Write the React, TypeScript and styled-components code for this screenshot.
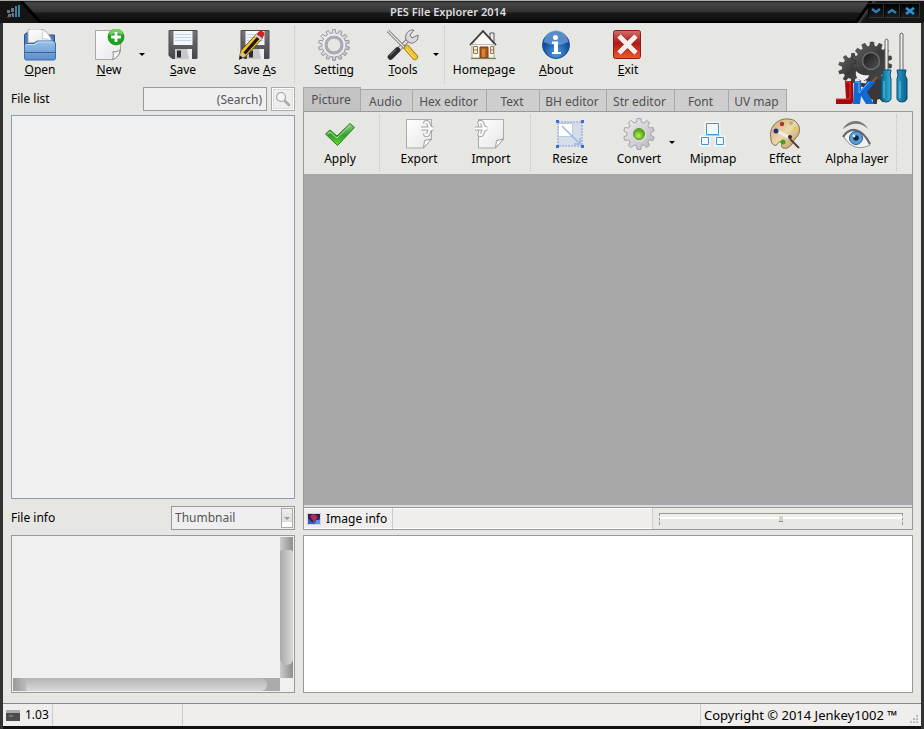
import React from "react";
import styled, { createGlobalStyle, css } from "styled-components";

const GlobalStyle = createGlobalStyle`
  * { box-sizing: border-box; }
  body {
    margin: 0;
    background: #333;
    color: #000;
    font: 12px/16px "Noto Sans", "Open Sans", sans-serif;
  }
  button, input, select, textarea { font: inherit; color: inherit; }
  button { padding: 0; border: 0; background: none; }
  svg { display: block; flex: none; }
`;

const Window = styled.div`
  min-height: 100vh;
  display: flex;
  flex-direction: column;
  background: #e6e6e2;
  border: solid #333;
  border-width: 0 3px;
`;

const TitleBar = styled.header`
  display: flex;
  align-items: stretch;
  height: 23px;
  margin: 0 -3px;
  border-top: 1px solid #aaa;
  background: linear-gradient(#1a1a1a 0, #464646 2px, #333 11px, #191919 12px, #101010 19px, #000 20px);
`;

const TitleText = styled.h1`
  flex: 1;
  margin: 0;
  text-align: center;
  color: #ddd;
  font: 600 11px/22px "Noto Sans", sans-serif;
`;

const AppBadge = styled.div`
  width: 42px;
`;

const WindowControls = styled.div`
  display: flex;
  align-items: flex-start;
  width: 70px;
  padding: 2px 3px 0 14px;
  background: linear-gradient(125deg, transparent 12px, #000 13px, #000 15px, #444 16px, #222 18px, #151515 19px);
`;

const ControlButton = styled.button<{ $wide?: boolean }>`
  display: grid;
  place-items: center;
  width: ${(p) => (p.$wide ? 20 : 16)}px;
  height: 15px;
  background: linear-gradient(#000, #1c1c1c);
  border: 1px solid #333;
  border-left-color: #000;
`;

const MainToolbar = styled.div`
  display: flex;
  justify-content: space-between;
  height: 64px;
  padding-left: 1px;
`;

const Tools = styled.div`
  display: flex;
  align-items: stretch;
`;

const PictureToolbar = styled(Tools)`
  height: 62px;
`;

const ToolItem = styled.button<{ $split?: boolean }>`
  display: flex;
  flex-direction: column;
  align-items: center;
  width: ${(p) => (p.$split ? 54 : 72)}px;
  margin-left: ${(p) => (p.$split ? 6 : 0)}px;
  padding-top: 6px;
  white-space: nowrap;
  gap: 1px;
`;

const ArrowItem = styled.button`
  width: 11px;
  display: grid;
  place-items: center;
  padding-bottom: 2px;
`;

const Divider = styled.div`
  width: 7px;
  display: flex;
  justify-content: center;
  padding: 3px 0;
  &::after {
    content: "";
    border-left: 1px dotted #c4c4c0;
  }
`;

const Logo = styled.div`
  padding: 9px 13px 0 0;
  height: 64px;
`;

const Body = styled.main`
  flex: 1;
  display: grid;
  grid-template-columns: 284px 1fr;
  gap: 8px;
  padding: 0 8px 10px;
`;

const Column = styled.section`
  display: flex;
  flex-direction: column;
  min-width: 0;
`;

const FieldRow = styled.div`
  display: flex;
  align-items: center;
  height: 24px;
  gap: 4px;
`;

const RowLabel = styled.label`
  flex: 1;
`;

const SearchInput = styled.input`
  width: 124px;
  height: 24px;
  padding: 0 4px;
  border: 1px solid #999;
  border-radius: 0;
  background: #efefef;
  color: #666;
  text-align: right;
  outline: 0;
  &::placeholder { color: #555; opacity: 1; }
`;

const SearchButton = styled.button`
  display: grid;
  place-items: center;
  width: 24px;
  height: 24px;
  border: 1px solid #aaa;
  background: #eee;
  box-shadow: inset 0 0 0 1px #fff, inset 0 0 0 2px #ddd;
`;

const FileList = styled.div`
  flex: 1;
  margin: 4px 0 7px;
  border: 1px solid #8a9db2;
  background: #f0f0f0;
`;

const SelectWrap = styled.div`
  display: grid;
  grid-template-columns: 1fr 14px;
  width: 124px;
  height: 24px;
  border: 1px solid #999;
  background: #efefef;
`;

const Select = styled.select`
  grid-area: 1 / 1 / 2 / 3;
  appearance: none;
  border: 0;
  padding: 0 16px 0 3px;
  background: transparent;
  color: #555;
  outline: 0;
`;

const SelectArrow = styled.span`
  grid-area: 1 / 2 / 2 / 3;
  display: grid;
  place-items: center;
  margin: 1px;
  pointer-events: none;
  border: 1px solid #aaa;
  background: linear-gradient(#eee, #ddd 70%, #fff 71%);
`;

const InfoBox = styled.div`
  display: grid;
  grid-template: 1fr 13px / 1fr 13px;
  height: 158px;
  margin-top: 5px;
  padding: 1px;
  border: 1px solid #999;
  background: #f0f0f0;
`;

const barFill = css<{ $vertical?: boolean }>`
  ${(p) => (p.$vertical ? "linear-gradient(to right, #aaa, #d8d8d8)" : "linear-gradient(#b4b4b4, #d8d8d8)")}
`;

const ScrollTrack = styled.div<{ $vertical?: boolean }>`
  padding: ${(p) => (p.$vertical ? "13px 0" : "0 13px")};
  background: linear-gradient(to right, ${(p) => (p.$vertical ? "#ccc, #8e8e8e" : "#999, #bbb 13px, #aaa")});
`;

const ScrollThumb = styled.div<{ $vertical?: boolean }>`
  height: 100%;
  background: ${barFill};
  border-radius: ${(p) => (p.$vertical ? "3px 3px 6px 6px" : "3px 6px 6px 3px")};
`;

const Tabs = styled.div`
  display: flex;
  align-items: flex-end;
  height: 24px;
`;

const Tab = styled.button<{ $width: number; $active?: boolean }>`
  width: ${(p) => p.$width}px;
  height: ${(p) => (p.$active ? 24 : 22)}px;
  padding-top: ${(p) => (p.$active ? 0 : 2)}px;
  padding-right: 2px;
  border: 1px solid #a8a8a8;
  border-width: 1px 1px 0 ${(p) => (p.$active ? 1 : 0)}px;
  background: ${(p) => (p.$active ? "#c3c3c3" : "#cecece")};
  color: #505050;
  white-space: nowrap;
`;

const Panel = styled.div`
  flex: 1;
  display: flex;
  flex-direction: column;
  border: 1px solid #999;
`;

const Canvas = styled.div`
  flex: 1;
  background: #a8a8a8;
  border-bottom: 2px solid #ddd;
`;

const ImageBar = styled.div`
  display: flex;
  align-items: stretch;
  height: 22px;
  border-top: 1px solid #999;
  background: #f0eeed;
  box-shadow: inset 0 1px #fff, inset 0 -1px #fff;
`;

const ImageInfo = styled.div`
  display: flex;
  align-items: center;
  gap: 5px;
  padding: 1px 5px 0 3px;
  border-right: 1px solid #ccc;
`;

const SliderCell = styled.div`
  width: 260px;
  margin-left: auto;
  padding: 5px 9px 3px 6px;
  border-left: 1px solid #ccc;
  background: #e8e8e4;
`;

const Slider = styled.input`
  appearance: none;
  display: block;
  width: 100%;
  height: 12px;
  margin: 0;
  border: dashed #999;
  border-width: 0 1px;
  background: linear-gradient(#999 0 1px, #f0f0e8 1px 4px, #fff 4px 6px, transparent 6px);
  &::-webkit-slider-thumb {
    appearance: none;
    width: 4px;
    height: 6px;
    border-bottom: 1px solid #888;
    background: #d5d5d0;
  }
`;

const Notes = styled.textarea`
  display: block;
  width: 100%;
  height: 158px;
  margin-top: 5px;
  resize: none;
  border: 1px solid #999;
  background: #fff;
  outline: 0;
`;

const StatusBar = styled.footer`
  display: flex;
  align-items: stretch;
  height: 26px;
  border-top: 1px solid #888;
  border-bottom: 3px solid #111;
  background: #f0eeed;
`;

const StatusCell = styled.div<{ $width?: number; $large?: boolean }>`
  display: flex;
  align-items: center;
  gap: 5px;
  ${(p) => (p.$width ? `width: ${p.$width}px;` : "flex: 1;")}
  padding-left: 3px;
  border-right: 1px solid #ccc;
  font-size: ${(p) => (p.$large ? 13 : 12)}px;
  white-space: nowrap;
  &:last-child { border-right: 0; }
`;

const Grip = styled.span`
  margin-left: auto;
  align-self: flex-end;
  padding: 0 3px 2px 0;
`;

function gear(cx: number, cy: number, teeth: number, outer: number, inner: number) {
  const pts: string[] = [];
  const step = (Math.PI * 2) / teeth;
  for (let i = 0; i < teeth; i++) {
    const a = i * step - Math.PI / 2;
    const corners: [number, number][] = [
      [inner, -0.32],
      [outer, -0.19],
      [outer, 0.19],
      [inner, 0.32],
    ];
    corners.forEach(([r, k]) => {
      const t = a + k * step;
      pts.push(`${(cx + r * Math.cos(t)).toFixed(2)} ${(cy + r * Math.sin(t)).toFixed(2)}`);
    });
  }
  return `M${pts.join("L")}Z`;
}

const Defs = () => (
  <svg width="0" height="0" aria-hidden="true">
    <defs>
      <linearGradient id="blueFolder" x2="0" y2="1"><stop stopColor="#9cc2ea" /><stop offset="1" stopColor="#5a8cca" /></linearGradient>
      <linearGradient id="paper" x2="1" y2="1"><stop stopColor="#fff" /><stop offset="1" stopColor="#e6e6e6" /></linearGradient>
      <linearGradient id="steel" x2="1" y2="1"><stop stopColor="#f2f2f5" /><stop offset="1" stopColor="#b4b4ba" /></linearGradient>
      <linearGradient id="disk" x2="0" y2="1"><stop stopColor="#77777b" /><stop offset="1" stopColor="#46464a" /></linearGradient>
      <linearGradient id="red" x2="0" y2="1"><stop stopColor="#d0706c" /><stop offset=".45" stopColor="#b01818" /><stop offset="1" stopColor="#f05a28" /></linearGradient>
      <radialGradient id="info" cy=".8"><stop stopColor="#4ba0e8" /><stop offset="1" stopColor="#1450a0" /></radialGradient>
      <linearGradient id="check" x2="0" y2="1"><stop stopColor="#8ccf7c" /><stop offset=".55" stopColor="#35a02c" /><stop offset="1" stopColor="#5ee02a" /></linearGradient>
      <radialGradient id="greenBall" cx=".45" cy=".65"><stop stopColor="#b8ee60" /><stop offset="1" stopColor="#5aa81e" /></radialGradient>
      <linearGradient id="palette" x2="1" y2="1"><stop stopColor="#c9a876" /><stop offset=".5" stopColor="#ecd8ac" /><stop offset="1" stopColor="#b08c58" /></linearGradient>
      <linearGradient id="darkGear" x2="1" y2="1"><stop stopColor="#666" /><stop offset=".5" stopColor="#3a3a3a" /><stop offset="1" stopColor="#4c4c4c" /></linearGradient>
      <linearGradient id="hub" x2="1" y2="1"><stop stopColor="#161616" /><stop offset="1" stopColor="#555" /></linearGradient>
      <linearGradient id="handle"><stop stopColor="#0a628c" /><stop offset=".4" stopColor="#35b8e4" /><stop offset="1" stopColor="#0a628c" /></linearGradient>
    </defs>
  </svg>
);

const Icon = ({ children }: { children: React.ReactNode }) => (
  <svg width="32" height="32" viewBox="0 0 32 32" aria-hidden="true">{children}</svg>
);

const OpenIcon = () => (
  <Icon>
    <path d="M.5 5.500 2 4h9l2 2h17.500V20H.5z" fill="#4a7abf" stroke="#2c5594" />
    <path d="M4 14V1.500L6 0c5 0 9-.5 13 .5 4 2 7 6 9 12.500z" fill="url(#paper)" stroke="#a5a5a5" />
    <path d="M19 .5c0 3 0 6-1 9 4 0 7 1 10 3C26 8 23 3 19 .5z" fill="#fff" stroke="#bbb" strokeWidth=".7" />
    <path d="M.5 16 2 14.500h8l3-2.500h17l1.500 2v15.500l-1 1.500h-29L.5 29z" fill="url(#blueFolder)" stroke="#3c6cae" />
    <path d="M1 23.500h30" stroke="#3663a0" /><path d="M2 15.500h9l3-2.500h15" stroke="#c8dff7" fill="none" />
  </Icon>
);

const NewIcon = () => (
  <Icon>
    <path d="M2.500 1.500h25V21c-1 5-4 8.500-8 9.500h-17z" fill="url(#paper)" stroke="#a8a8a8" />
    <path d="M19.500 30.500c1-3 1-5 .5-8 3 1 5 0 7.500-2-1 5-4 9-8 10z" fill="#fafafa" stroke="#888" />
    <circle cx="23" cy="8" r="8" fill="#19a319" stroke="#168016" strokeWidth=".6" />
    <path d="M16 6a7 7 0 0 1 14 0c-4-2-9-2-14 0z" fill="#71cf66" />
    <path d="M23 3v10M18 8h10" stroke="#fff" strokeWidth="2.800" />
  </Icon>
);

const DiskArt = () => (
  <>
    <path d="M2 1.500h28v28H5l-3-3z" fill="url(#disk)" stroke="#4c4c50" />
    <path d="M6.500 2h19v14h-19z" fill="#f3f6fa" />
    <path d="M8 5.500h16M8 8.500h16M8 11.500h16" stroke="#c3d3e8" />
    <path d="M8 20h17v10H8z" fill="#c8c8c8" /><path d="M10 21.500h4v7h-4z" fill="#2c2c2c" />
    <path d="M20 20h5v10h-3z" fill="#eee" />
  </>
);
const SaveIcon = () => <Icon><DiskArt /></Icon>;
const SaveAsIcon = () => (
  <Icon>
    <DiskArt />
    <path d="m0 30.500 2-9L17.500 5l6 4.500L7 27z" fill="#f5c528" stroke="#4c3a10" strokeWidth=".8" />
    <path d="m5.500 24.500 15-17" stroke="#1f160c" strokeWidth="3.200" />
    <path d="m17.500 5 3-3c3-1 6 2 4.500 4.500l-2 3z" fill="#d32020" />
    <path d="m16 6.500 1.500-1.500 6 4.500-1.500 2z" fill="#ccc" />
    <path d="m0 30.500 2-8 5 4.500z" fill="#e2bd84" /><path d="m0 30.500 1-4 3 2.500z" fill="#111" />
  </Icon>
);

const SettingIcon = () => (
  <Icon>
    <path fillRule="evenodd" d={`${gear(16, 16, 14, 15.5, 12)}M16 9a7 7 0 1 0 0 14 7 7 0 0 0 0-14z`} fill="url(#steel)" stroke="#85858c" strokeWidth=".8" />
    <circle cx="16" cy="16" r="8.500" fill="none" stroke="#a8a8b4" strokeWidth="2" />
    <circle cx="16" cy="16" r="10.500" fill="none" stroke="#ededf2" strokeWidth="1.500" />
  </Icon>
);

const ToolsIcon = () => (
  <Icon>
    <path d="m10 22 12-12" stroke="#77777e" strokeWidth="4.500" />
    <path d="m10 22 12-12" stroke="#dcdce0" strokeWidth="2.500" />
    <path d="M19 11c-2-6 3-11 8-10l-4 5 2 3 6-3c1 5-4 9-8 8z" fill="#d9d9de" stroke="#77777e" />
    <path d="m3.500 28 7-7" stroke="#2c2c2f" strokeWidth="5.500" strokeLinecap="round" />
    <path d="m3 26.500 6-6" stroke="#8a8a8e" />
    <path d="m1 2 17 17" stroke="#606064" strokeWidth="2.800" /><path d="m1 2 17 17" stroke="#f2f2f2" strokeWidth="1.200" />
    <path d="m20 19 8 9" stroke="#9a7412" strokeWidth="6" strokeLinecap="round" />
    <path d="m20 19 8 9" stroke="#f0c52a" strokeWidth="4.500" strokeLinecap="round" />
    <path d="m19 20 8 9" stroke="#ffe987" />
  </Icon>
);

const HomeIcon = () => (
  <Icon>
    <path d="M22 4h4v9h-4z" fill="#eee" stroke="#555" />
    <path d="M4 15 15 3l11 12v14H4z" fill="#f8f7f3" stroke="#aaa" />
    <path d="M2 16 15 2l13 14" fill="none" stroke="#3a3a3a" strokeWidth="1.800" />
    <path d="M3 15.500h24" stroke="#bbb" />
    <path d="M12 18h8v11h-8z" fill="#b55a1c" stroke="#73340c" /><path d="M14 20h3v8h-3z" fill="#d88438" />
    <path d="M5.500 17.500h4v7h-4zM22.500 17.500h3v7h-3zM5.500 21h4m13 0h3" fill="#f7edc4" stroke="#9a7850" />
    <path d="M3 29.500h25" stroke="#76865e" strokeWidth="1.200" />
  </Icon>
);

const AboutIcon = () => (
  <Icon>
    <circle cx="16" cy="16" r="13.500" fill="url(#info)" stroke="#1b4c8e" />
    <path d="M4 13a12 12 0 0 1 24 0c-6 4-17 4-24 0z" fill="#8fbbe7" opacity=".55" />
    <circle cx="15.500" cy="8.500" r="2.500" fill="#fff" />
    <path d="M12 12.500h6V23h3v2h-9v-2h2v-8h-2z" fill="#fff" />
  </Icon>
);

const ExitIcon = () => (
  <Icon>
    <rect x="1.500" y="1.500" width="27" height="28" rx="2" fill="url(#red)" stroke="#8e1717" />
    <path d="m7 7 17 17M24 7 7 24" stroke="#8d1b16" strokeWidth="6.500" opacity=".5" />
    <path d="m7 7 17 17M24 7 7 24" stroke="#f5f0ee" strokeWidth="5" />
  </Icon>
);

const ApplyIcon = () => (
  <Icon>
    <path d="m1.500 16 4.500-4 7 6L26 5.500l4.500 4-17 18z" fill="url(#check)" stroke="#277d25" strokeLinejoin="round" />
    <path d="m3.500 16 2.500-2 7 6L26 7.500" fill="none" stroke="#b5dfaa" />
  </Icon>
);

const SheetArt = () => (
  <>
    <path d="M3.500 1.500h25V21l-8 9h-17z" fill="url(#paper)" stroke="#aaa" />
    <path d="m20.500 30 1-7.500 7-1.500z" fill="#fff" stroke="#999" />
  </>
);
const HookArrow = ({ x }: { x: number }) => {
  const d = "M0 10.500h11M4 5.500c0-2 3-2 3.500 0 0 3 2 4.500 4.500 5-2.500.5-4.500 2-4.500 5-.5 2-3.500 2-3.500 0";
  return (
    <g transform={`translate(${x} 0)`} fill="none">
      <path d={d} stroke="#a2a2a2" strokeWidth="4" />
      <path d={d} stroke="#fff" strokeWidth="2" />
    </g>
  );
};
const ExportIcon = () => <Icon><SheetArt /><HookArrow x={18} /></Icon>;
const ImportIcon = () => <Icon><SheetArt /><HookArrow x={0} /></Icon>;

const ResizeIcon = () => (
  <Icon>
    <path d="M4 4h24v24H4z" fill="#d5dcea" stroke="#7da0dc" strokeDasharray="2 1" />
    <path d="M4.500 5.500h14v13h-14z" fill="#fff" stroke="#bbc9dc" />
    <path d="m8 8 17 17M26 20v6h-6" fill="none" stroke="#9ab6e4" strokeWidth="1.500" />
    <path d="M2 2h3v3H2zM27 2h3v3h-3zM2 27h3v3H2zM27 27h3v3h-3z" fill="#3f70c8" />
  </Icon>
);

const ConvertIcon = () => (
  <Icon>
    <path d={gear(16, 16, 10, 15.5, 12)} fill="url(#steel)" stroke="#a2a2a8" />
    <circle cx="16" cy="16" r="8" fill="#d8d8dc" />
    <circle cx="16" cy="16" r="5.500" fill="url(#greenBall)" stroke="#5a9a28" />
  </Icon>
);

const MipmapIcon = () => (
  <Icon>
    <path d="M9.500 5.500h12v11h-12zM4.500 19.500h7v7h-7zM19.500 19.500h7v7h-7z" fill="#f7fbff" stroke="#f6f8f8" strokeWidth="4" />
    <path d="M9.500 5.500h12v11h-12zM4.500 19.500h7v7h-7zM19.500 19.500h7v7h-7z" fill="#f1f8fe" stroke="#3a98d4" />
    <path d="M8 17.500h15" stroke="#d8a8a0" strokeWidth=".7" />
  </Icon>
);

const EffectIcon = () => (
  <Icon>
    <path d="M2 21C-1 8 10 0 19 1c9 0 13 8 11 14-1 4-4 5-6 9-2 5-6 7-10 6-3-2 0-5-2-6-4-1-3 5-7 3-2-1-3-3-3-6z" fill="url(#palette)" stroke="#8a6f48" />
    <circle cx="13" cy="6" r="2.200" fill="#a8342c" /><circle cx="22" cy="5" r="2" fill="#b8b088" />
    <circle cx="26" cy="11" r="2.200" fill="#e0cd57" /><circle cx="14" cy="24" r="2.500" fill="#459f23" />
    <path d="m8 13 13 7" stroke="#eee" strokeWidth="3" /><path d="m21 21 9 9" stroke="#58412c" strokeWidth="2" />
    <circle cx="7" cy="13" r="2.500" fill="#20307e" /><circle cx="21" cy="19" r="2" fill="#31261e" />
  </Icon>
);

const AlphaIcon = () => (
  <Icon>
    <path d="M2 11C7 1 21 0 27 11 20 4 11 4 2 11z" fill="#77777b" />
    <path d="M3 19C8 9 20 9 29 27c-9 5-20 3-26-8z" fill="#f0f1f3" stroke="#909094" />
    <path d="M2 19C8 9 20 8 29 26" fill="none" stroke="#6a6a6e" strokeWidth="2.200" />
    <circle cx="15" cy="20" r="6.500" fill="#5a9fd4" stroke="#265c91" />
    <circle cx="15" cy="20" r="2.800" fill="#14263d" /><circle cx="13" cy="18" r="1.400" fill="#d7f2ff" />
  </Icon>
);

const LogoArt = () => (
  <svg width="72" height="74" viewBox="0 0 72 74" role="img" aria-label="JK">
    <path d={gear(17, 36, 10, 15, 11)} fill="url(#darkGear)" />
    <path d={gear(39, 57, 10, 15, 11)} fill="#383838" />
    <path d={gear(36, 30, 14, 20, 16)} fill="url(#darkGear)" stroke="#333" strokeWidth=".6" />
    <circle cx="35" cy="29" r="8.500" fill="url(#hub)" stroke="#6c6c6c" strokeWidth="1.500" />
    <path d="M20 39c-1 6 2 9 7 10l5-3 1-3c-6 1-10-1-13-4z" fill="#eee" />
    <path d="m34 52 7-7" stroke="#8a5a34" strokeWidth="2" />
    <path d="M9 49h8v21q0 2-2 2H0v-5h10z" fill="#a60909" /><path d="M9 50h5v17H0" fill="none" stroke="#e0403a" />
    <path d="M18 49h7v9l7-9h8l-9 11 7 12h-8l-5-8-1 8h-7z" fill="#1269d4" /><path d="M19 50h4v11l10-11" stroke="#62b8ff" fill="none" />
    <path d="M49 8q1-2 3 0v32h-3zM64 2q1-2 3 0v38h-3z" fill="#eee" stroke="#666" />
    <path d="M46 38h9l-1 5 1 4v20q-1 3-5 3t-5-3V47l2-4zM61 38h9l-1 5 2 4v20q-1 3-5 3t-5-3V47l1-4z" fill="url(#handle)" stroke="#0b4b6a" />
    <path d="M48 49v17m16-17v17" stroke="#62d0ef" />
  </svg>
);

const Arrow = ({ color = "#000" }: { color?: string }) => (
  <svg width="6" height="3" viewBox="0 0 6 3"><path d="M0 0h6L3 3z" fill={color} /></svg>
);

const Key = ({ text, at }: { text: string; at?: number }) =>
  at === undefined ? <span>{text}</span> : <span>{text.slice(0, at)}<u>{text[at]}</u>{text.slice(at + 1)}</span>;

type Item = { label: string; at?: number; icon: () => React.ReactElement; menu?: boolean; end?: boolean };

const mainItems: Item[] = [
  { label: "Open", at: 0, icon: OpenIcon },
  { label: "New", at: 0, icon: NewIcon, menu: true },
  { label: "Save", at: 0, icon: SaveIcon },
  { label: "Save As", at: 5, icon: SaveAsIcon, end: true },
  { label: "Setting", at: 5, icon: SettingIcon },
  { label: "Tools", at: 0, icon: ToolsIcon, menu: true, end: true },
  { label: "Homepage", at: 4, icon: HomeIcon },
  { label: "About", at: 0, icon: AboutIcon },
  { label: "Exit", at: 0, icon: ExitIcon },
];

const pictureItems: Item[] = [
  { label: "Apply", icon: ApplyIcon, end: true },
  { label: "Export", icon: ExportIcon },
  { label: "Import", icon: ImportIcon, end: true },
  { label: "Resize", icon: ResizeIcon },
  { label: "Convert", icon: ConvertIcon, menu: true },
  { label: "Mipmap", icon: MipmapIcon },
  { label: "Effect", icon: EffectIcon },
  { label: "Alpha layer", icon: AlphaIcon, end: true },
];

const ToolSet = ({ items }: { items: Item[] }) => (
  <>
    {items.map(({ label, at, icon: Glyph, menu, end }) => (
      <React.Fragment key={label}>
        <ToolItem type="button" $split={menu}><Glyph /><Key text={label} at={at} /></ToolItem>
        {menu && <ArrowItem type="button" aria-label={`${label} menu`}><Arrow /></ArrowItem>}
        {end && <Divider />}
      </React.Fragment>
    ))}
  </>
);

const tabs: [string, number][] = [
  ["Picture", 58], ["Audio", 52], ["Hex editor", 74], ["Text", 53],
  ["BH editor", 67], ["Str editor", 68], ["Font", 54], ["UV map", 58],
];

export default function App() {
  return (
    <>
      <GlobalStyle />
      <Window>
        <TitleBar>
          <AppBadge>
            <svg width="42" height="22" viewBox="0 0 42 22" aria-hidden="true">
              <path d="M0 0h22l20 22H0z" fill="#141414" /><path d="m21 0 20 22" stroke="#000" strokeWidth="3" />
              <path d="M7 9h3v3H7zM8 13h3v3H8zM11 7h3v4h-3zM12 12h2v4h-2z" fill="#68757d" /><path d="M16 5v11M19 4v12" stroke="#4aa3cf" strokeWidth="1.500" />
              <path d="M7 16h3" stroke="#a33" /><path d="m11 13 3 3" stroke="#38d" />
            </svg>
          </AppBadge>
          <TitleText>PES File Explorer 2014</TitleText>
          <WindowControls>
            <ControlButton type="button" aria-label="Minimize">
              <svg width="10" height="8" viewBox="0 0 10 8"><path d="m1 2 4 3 4-3" fill="none" stroke="#2b7fb5" strokeWidth="2.500" /></svg>
            </ControlButton>
            <ControlButton type="button" aria-label="Maximize">
              <svg width="10" height="8" viewBox="0 0 10 8"><path d="m1 6 4-3 4 3" fill="none" stroke="#2b7fb5" strokeWidth="2.500" /></svg>
            </ControlButton>
            <ControlButton type="button" aria-label="Close" $wide>
              <svg width="10" height="8" viewBox="0 0 10 8"><path d="m1 1 8 6M9 1 1 7" stroke="#2b8fd0" strokeWidth="2.800" /></svg>
            </ControlButton>
          </WindowControls>
        </TitleBar>

        <MainToolbar>
          <Tools><ToolSet items={mainItems} /></Tools>
          <Logo><LogoArt /></Logo>
        </MainToolbar>

        <Body>
          <Column>
            <FieldRow>
              <RowLabel htmlFor="search">File list</RowLabel>
              <SearchInput id="search" placeholder="(Search)" />
              <SearchButton type="button" aria-label="Search">
                <svg width="16" height="16" viewBox="0 0 16 16">
                  <path d="m9 9 5 5" stroke="#aaa" strokeWidth="2.500" strokeLinecap="round" />
                  <circle cx="6" cy="6" r="4.500" fill="#f2f4f8" stroke="#a5a5aa" strokeWidth="1.200" />
                </svg>
              </SearchButton>
            </FieldRow>
            <FileList />
            <FieldRow>
              <RowLabel htmlFor="view">File info</RowLabel>
              <SelectWrap>
                <Select id="view" defaultValue="Thumbnail"><option>Thumbnail</option></Select>
                <SelectArrow><Arrow color="#999" /></SelectArrow>
              </SelectWrap>
            </FieldRow>
            <InfoBox>
              <div />
              <ScrollTrack $vertical><ScrollThumb $vertical /></ScrollTrack>
              <ScrollTrack><ScrollThumb /></ScrollTrack>
            </InfoBox>
          </Column>

          <Column>
            <Tabs role="tablist">
              {tabs.map(([name, width], i) => (
                <Tab key={name} type="button" role="tab" aria-selected={i === 0} $width={width} $active={i === 0}>{name}</Tab>
              ))}
            </Tabs>
            <Panel>
              <PictureToolbar><ToolSet items={pictureItems} /></PictureToolbar>
              <Canvas />
              <ImageBar>
                <ImageInfo>
                  <svg width="14" height="12" viewBox="0 0 14 12" aria-hidden="true">
                    <path d="M0 0h14v12H0z" fill="#fff" stroke="#aaa" /><path d="M1 1h12v10H1z" fill="#2f62c4" />
                    <path d="M1 1h12v4L9 9H5L1 5z" fill="#3a194f" /><path d="m3 3 4-2 4 3-4 6z" fill="#a8305a" /><path d="M9 7h4v4H8z" fill="#4d9be8" />
                  </svg>
                  Image info
                </ImageInfo>
                <SliderCell><Slider type="range" aria-label="Zoom" defaultValue={50} /></SliderCell>
              </ImageBar>
            </Panel>
            <Notes aria-label="Output" />
          </Column>
        </Body>

        <StatusBar>
          <StatusCell $width={50}>
            <svg width="14" height="12" viewBox="0 0 14 12" aria-hidden="true">
              <path d="M0 1h14v11H0z" fill="#4c4c4c" /><path d="M0 1h14v3H0z" fill="#aaa" /><path d="M3 7h4" stroke="#999" />
            </svg>
            1.03
          </StatusCell>
          <StatusCell $width={130} />
          <StatusCell />
          <StatusCell $width={220} $large>
            Copyright © 2014 Jenkey1002 ™
            <Grip>
              <svg width="9" height="9" viewBox="0 0 9 9">
                <path d="M7 0h2v2H7zM4 3h2v2H4zM7 3h2v2H7zM1 6h2v2H1zM4 6h2v2H4zM7 6h2v2H7z" fill="#bbb" />
              </svg>
            </Grip>
          </StatusCell>
        </StatusBar>
        <Defs />
      </Window>
    </>
  );
}
